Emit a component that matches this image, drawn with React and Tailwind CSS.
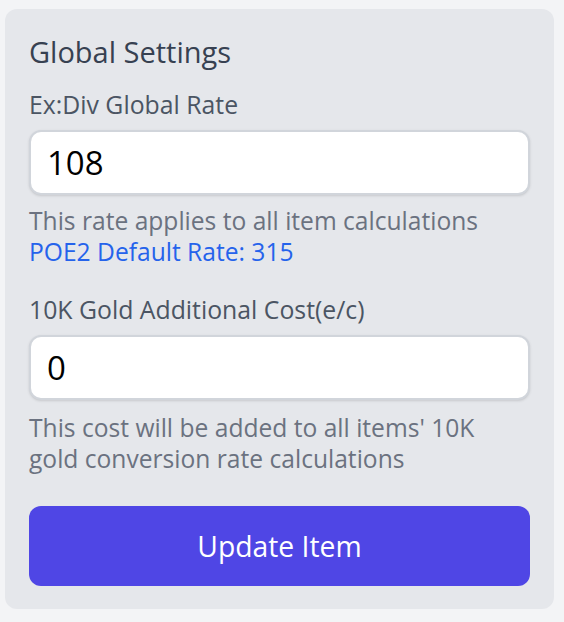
import { useState } from "react";

const font = { fontFamily: '"Open Sans", "Noto Sans", sans-serif' };

const GlobalSettings = () => {

  const [rate, setRate] = useState("108");
  const [goldCost, setGoldCost] = useState("0");

  return (

    <div className="min-h-screen bg-[#f3f4f6] pl-[5px] pt-[9px]">

      <div className="w-[549px] bg-[#e5e7eb] rounded-[12px] px-6 pt-6 pb-[23px] flex flex-col">

        <h2 className="text-[29px] leading-[38px] text-[#374151]">
          Global Settings
        </h2>

        {/* RATE */}

        <label className="mt-[17px] text-[24.8px] leading-[32px] text-[#4b5563]">
          Ex:Div Global Rate
        </label>

        <input
          value={rate}
          onChange={e => setRate(e.target.value)}
          className="mt-[10px] h-[65px] w-full bg-white border-2 border-[#d1d5db] rounded-[12px] px-4 text-[33px] text-black shadow-sm outline-none"
        />

        <div className="mt-[10px] text-[24.6px] leading-[31px]">
          <p className="text-[#6b7280]">
            This rate applies to all item calculations
          </p>
          <p className="text-[#2563eb]">
            POE2 Default Rate: 315
          </p>
        </div>

        {/* GOLD */}

        <label className="mt-[26px] text-[24.8px] leading-[32px] text-[#4b5563]">
          10K Gold Additional Cost(e/c)
        </label>

        <input
          value={goldCost}
          onChange={e => setGoldCost(e.target.value)}
          className="mt-[10px] h-[65px] w-full bg-white border-2 border-[#d1d5db] rounded-[12px] px-4 text-[33px] text-black shadow-sm outline-none"
        />

        <p className="mt-[12px] text-[24.6px] leading-[31px] text-[#6b7280]">
          This cost will be added to all items' 10K gold conversion rate calculations
        </p>

        <button className="mt-[32px] h-[80px] w-full bg-[#4f46e5] rounded-[12px] text-white text-[28.3px]">
          Update Item
        </button>

      </div>

    </div>

  );

};

const App = () => (
  <div style={font}>
    <GlobalSettings />
  </div>
);

export default App;
